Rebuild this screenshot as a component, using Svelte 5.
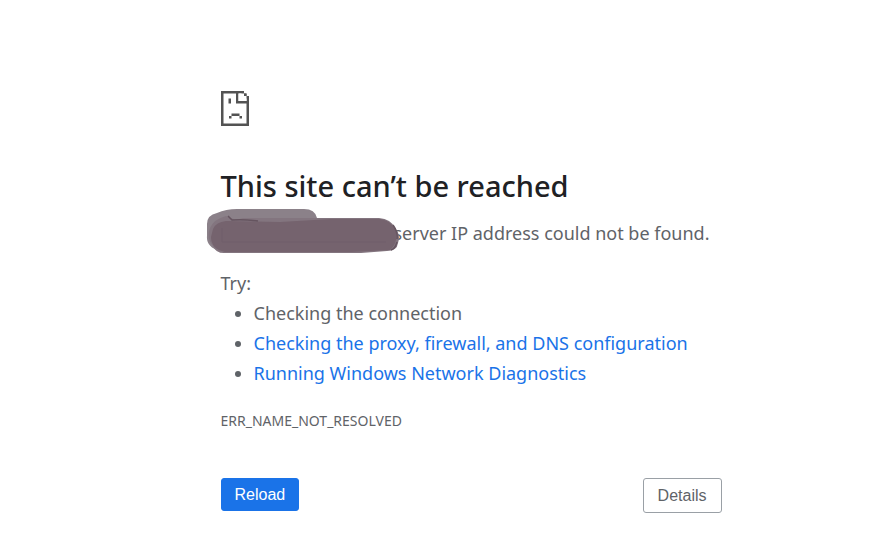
<script>
  let showDetails = $state(false);
  const suggestions = [
    { text: 'Checking the connection' },
    { text: 'Checking the proxy, firewall, and DNS configuration', href: '#proxy' },
    { text: 'Running Windows Network Diagnostics', href: '#diagnostics' }
  ];
</script>

<main class="page">
  <div class="content">
    <svg class="icon" viewBox="0 0 28 35" aria-hidden="true">
      <path fill="#535353" d="M0 0H23V2.5H25.5V5H28V35H0ZM2.5 2.5V32.5H25.5V12.5H15V2.5ZM17.5 2.5V10H25.5V7.5H23V5H20.5V2.5Z" fill-rule="evenodd" />
      <path fill="#fff" d="M17.5 2.5H23V5H25.5V10H17.5Z" />
      <path fill="#535353" d="M23 2.5H25.5V5H23ZM7.5 7.5H10V12.5H7.5ZM10.5 22.5H18.5V25H10.5ZM8 25H10.5V27.5H8ZM18.5 25H21V27.5H18.5Z" />
    </svg>

    <h1>This site can’t be reached</h1>

    <p class="summary">
      <svg class="marker" viewBox="0 0 194 46" role="img" aria-label="Hidden address">
        <path fill="#8b8189" d="M1 16Q1 7 11 5Q20 1 31 1H98Q109 1 111 10L125 12V43H14Q0 39 1 28Z" />
        <path fill="#83757f" d="M4 20Q8 11 20 8L30 12L37 10H173Q185 11 189 20Q195 27 192 35Q191 43 181 43L155 45H20Q10 46 7 38Q0 30 4 20Z" />
        <path fill="#75636e" d="M7 21Q10 14 20 13L74 14L125 11H174Q187 13 190 24Q192 35 184 42L145 44H19Q5 41 5 29Z" />
        <path fill="none" stroke="#65545f" stroke-width="1.5" d="M22 8L26 12Q37 11 52 13M187 17Q192 24 191 31M191 34Q189 41 185 42" />
        <path fill="none" stroke="#715f6a" stroke-width="1" d="M16 20V34H180" />
      </svg>
      <span>server IP address could not be found.</span>
    </p>

    <p class="try">Try:</p>
    <ul>
      {#each suggestions as item}
        <li>
          {#if item.href}<a href={item.href}>{item.text}</a>{:else}{item.text}{/if}
        </li>
      {/each}
    </ul>

    <p class="code">ERR_NAME_NOT_RESOLVED</p>

    <div class="actions">
      <button class="reload" type="button" onclick={() => location.reload()}>Reload</button>
      <button class="details" type="button" aria-expanded={showDetails} onclick={() => (showDetails = !showDetails)}>Details</button>
    </div>
  </div>
</main>

<style>
  :global(body) {
    margin: 0;
    background: #fff;
  }
  .page {
    padding: 91px 0 23px 49px;
    color: #5f6368;
    font-family: 'Segoe UI', 'Noto Sans', 'Open Sans', sans-serif;
    font-size: 18px;
    line-height: 30px;
  }
  .content {
    max-width: 501px;
    margin: 0 auto;
  }
  .icon {
    display: block;
    width: 28px;
    height: 35px;
  }
  h1 {
    margin: 42px 0 14px;
    color: #202124;
    font-size: 29px;
    font-weight: 500;
    line-height: 36px;
    white-space: nowrap;
  }
  p {
    margin: 0;
  }
  .summary {
    position: relative;
    display: flex;
    justify-content: flex-end;
    padding-right: 12px;
    white-space: nowrap;
  }
  .marker {
    position: absolute;
    top: -10px;
    left: -15px;
    width: 194px;
    height: 46px;
  }
  .try {
    margin-top: 20px;
  }
  ul {
    margin: 0;
    padding-left: 33px;
  }
  li {
    white-space: nowrap;
  }
  a {
    color: #1a73e8;
    text-decoration: none;
  }
  .code {
    margin-top: 18px;
    font-size: 14px;
  }
  .actions {
    display: flex;
    justify-content: space-between;
    align-items: flex-start;
    margin-top: 42px;
  }
  button {
    box-sizing: border-box;
    border: 1px solid #1a73e8;
    border-radius: 3px;
    font-family: 'Liberation Sans', Arial, sans-serif;
    font-size: 16px;
    line-height: 19px;
    cursor: pointer;
  }
  .reload {
    padding: 6px 13px;
    background: #1a73e8;
    color: #fff;
  }
  .details {
    padding: 7px 14px;
    border-color: #9aa0a6;
    background: #fff;
    color: #5f6368;
  }
</style>
